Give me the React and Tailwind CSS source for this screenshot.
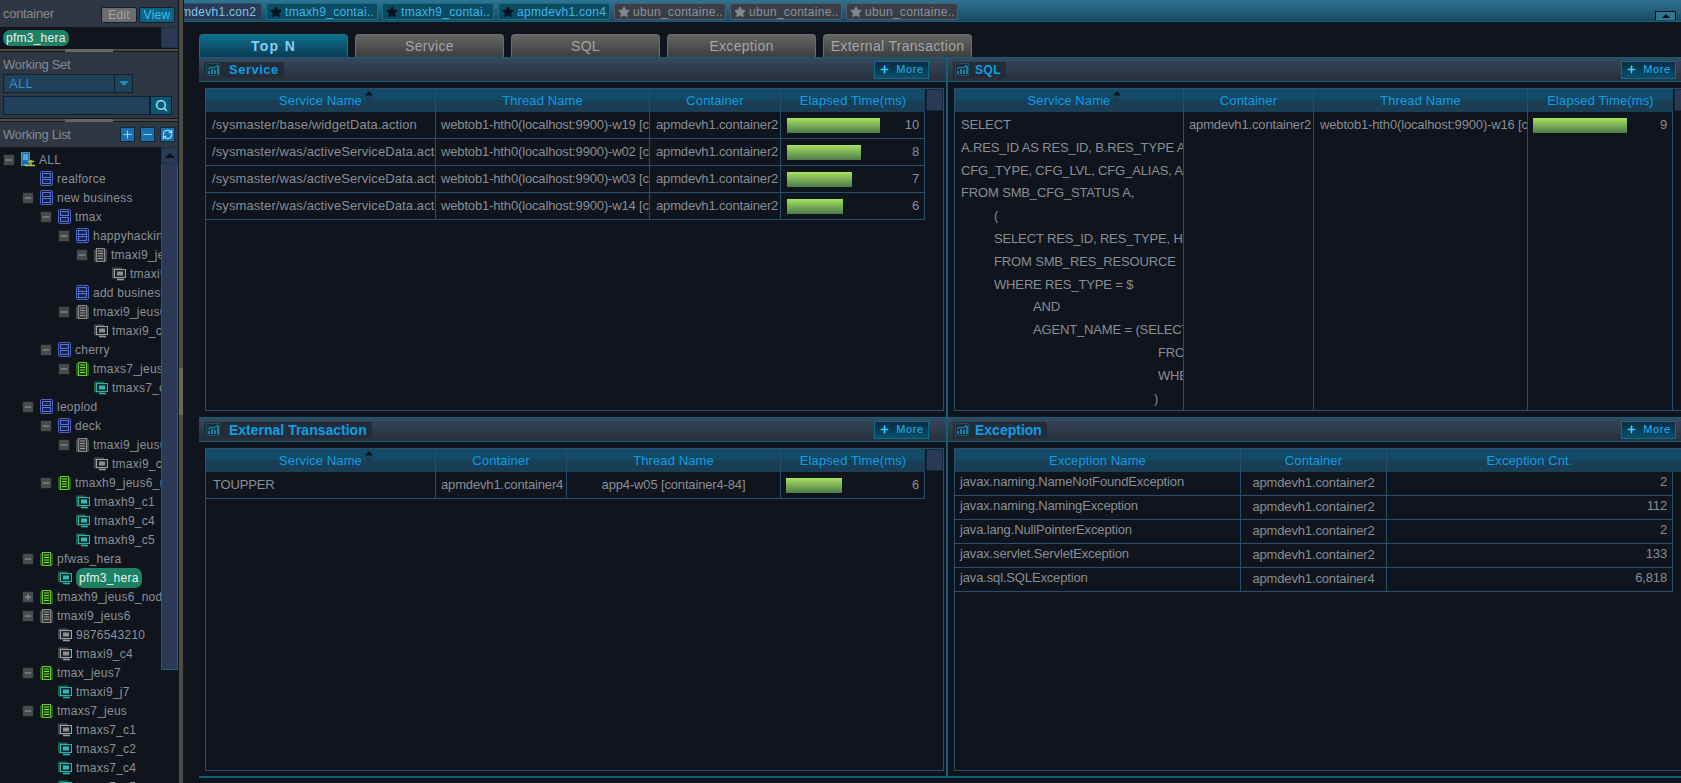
import { Minus, Plus, RefreshCw, Search, Star } from 'lucide-react'

const fontStack = "font-['Liberation_Sans',Arial,sans-serif]"

const topTabs = [
  { label: 'apmdevh1.con2', kind: 'first' },
  { label: 'tmaxh9_contai..', kind: 'teal' },
  { label: 'tmaxh9_contai..', kind: 'teal' },
  { label: 'apmdevh1.con4', kind: 'teal' },
  { label: 'ubun_containe..', kind: 'gray' },
  { label: 'ubun_containe..', kind: 'gray' },
  { label: 'ubun_containe..', kind: 'gray' },
]

const levelPad = [
  'pl-[3px]',
  'pl-[22px]',
  'pl-[40px]',
  'pl-[58px]',
  'pl-[76px]',
  'pl-[94px]',
]

const tree = [
  { level: 0, box: '-', icon: 'root', label: 'ALL' },
  { level: 1, icon: 'group', label: 'realforce' },
  { level: 1, box: '-', icon: 'group', label: 'new business' },
  { level: 2, box: '-', icon: 'group', label: 'tmax' },
  { level: 3, box: '-', icon: 'group', label: 'happyhacking' },
  { level: 4, box: '-', icon: 'rackGray', label: 'tmaxi9_jeus6' },
  { level: 5, icon: 'pcGray', label: 'tmaxi9_c1' },
  { level: 3, icon: 'group', label: 'add business' },
  { level: 3, box: '-', icon: 'rackGray', label: 'tmaxi9_jeus6_node' },
  { level: 4, icon: 'pcGray', label: 'tmaxi9_c5' },
  { level: 2, box: '-', icon: 'group', label: 'cherry' },
  { level: 3, box: '-', icon: 'rackGreen', label: 'tmaxs7_jeus7' },
  { level: 4, icon: 'pcTeal', label: 'tmaxs7_c3' },
  { level: 1, box: '-', icon: 'group', label: 'leoplod' },
  { level: 2, box: '-', icon: 'group', label: 'deck' },
  { level: 3, box: '-', icon: 'rackGray', label: 'tmaxi9_jeus6_node' },
  { level: 4, icon: 'pcGray', label: 'tmaxi9_c1' },
  { level: 2, box: '-', icon: 'rackGreen', label: 'tmaxh9_jeus6_node' },
  { level: 3, icon: 'pcTeal', label: 'tmaxh9_c1' },
  { level: 3, icon: 'pcTeal', label: 'tmaxh9_c4' },
  { level: 3, icon: 'pcTeal', label: 'tmaxh9_c5' },
  { level: 1, box: '-', icon: 'rackGreen', label: 'pfwas_hera' },
  { level: 2, icon: 'pcTeal', label: 'pfm3_hera', chip: true },
  { level: 1, box: '+', icon: 'rackGreen', label: 'tmaxh9_jeus6_node' },
  { level: 1, box: '-', icon: 'rackGray', label: 'tmaxi9_jeus6' },
  { level: 2, icon: 'pcGray', label: '9876543210' },
  { level: 2, icon: 'pcGray', label: 'tmaxi9_c4' },
  { level: 1, box: '-', icon: 'rackGreen', label: 'tmax_jeus7' },
  { level: 2, icon: 'pcTeal', label: 'tmaxi9_j7' },
  { level: 1, box: '-', icon: 'rackGreen', label: 'tmaxs7_jeus' },
  { level: 2, icon: 'pcGray', label: 'tmaxs7_c1' },
  { level: 2, icon: 'pcTeal', label: 'tmaxs7_c2' },
  { level: 2, icon: 'pcTeal', label: 'tmaxs7_c4' },
  { level: 2, icon: 'pcTeal', label: 'tmaxs7_c5' },
]

const serviceRows = [
  ['/sysmaster/base/widgetData.action', 'webtob1-hth0(localhost:9900)-w19 [container2-19]', 'apmdevh1.container2', 93, 10],
  ['/sysmaster/was/activeServiceData.action', 'webtob1-hth0(localhost:9900)-w02 [container2-02]', 'apmdevh1.container2', 74, 8],
  ['/sysmaster/was/activeServiceData.action', 'webtob1-hth0(localhost:9900)-w03 [container2-03]', 'apmdevh1.container2', 65, 7],
  ['/sysmaster/was/activeServiceData.action', 'webtob1-hth0(localhost:9900)-w14 [container2-14]', 'apmdevh1.container2', 56, 6],
]

const sqlLines = [
  { text: 'SELECT', pad: 'pl-0' },
  { text: 'A.RES_ID AS RES_ID, B.RES_TYPE AS RES_TYPE,', pad: 'pl-0' },
  { text: 'CFG_TYPE, CFG_LVL, CFG_ALIAS, A.CFG_VALUE', pad: 'pl-0' },
  { text: 'FROM SMB_CFG_STATUS A,', pad: 'pl-0' },
  { text: '(', pad: 'pl-[33px]' },
  { text: 'SELECT RES_ID, RES_TYPE, HOST_NAME', pad: 'pl-[33px]' },
  { text: 'FROM SMB_RES_RESOURCE', pad: 'pl-[33px]' },
  { text: 'WHERE RES_TYPE = $', pad: 'pl-[33px]' },
  { text: 'AND', pad: 'pl-[72px]' },
  { text: 'AGENT_NAME = (SELECT AGENT_NAME', pad: 'pl-[72px]' },
  { text: 'FROM', pad: 'pl-[197px]' },
  { text: 'WHERE', pad: 'pl-[197px]' },
  { text: ')', pad: 'pl-[193px]' },
]

const exceptionRows = [
  ['javax.naming.NameNotFoundException', 'apmdevh1.container2', '2'],
  ['javax.naming.NamingException', 'apmdevh1.container2', '112'],
  ['java.lang.NullPointerException', 'apmdevh1.container2', '2'],
  ['javax.servlet.ServletException', 'apmdevh1.container2', '133'],
  ['java.sql.SQLException', 'apmdevh1.container4', '6,818'],
]

function TreeIcon({ kind }) {
  if (kind === 'root') {
    return (
      <svg viewBox="0 0 14 15" className="h-[15px] w-[14px] shrink-0">
        <rect x="0.5" y="0.5" width="8" height="13" fill="#1d6fa8" stroke="#3f8fc8" />
        <path d="M2 3h5M2 5h5M2 7h5" stroke="#9fd0ee" />
        <path d="M7 9.5h6M10 8v2M4.5 13.5h10M4.5 12v2M10 10v4" stroke="#b7c93a" strokeWidth="1.4" fill="none" />
      </svg>
    )
  }
  if (kind === 'group') {
    return (
      <svg viewBox="0 0 13 15" className="h-[15px] w-[13px] shrink-0">
        <rect x="0.5" y="0.5" width="12" height="14" rx="1.5" fill="#141c33" stroke="#4a62c4" />
        <rect x="2.5" y="2.5" width="8" height="4" fill="#1b2444" stroke="#5a74d8" />
        <rect x="2.5" y="8.5" width="8" height="4" fill="#1b2444" stroke="#5a74d8" />
      </svg>
    )
  }
  if (kind === 'rackGray' || kind === 'rackGreen') {
    const green = kind === 'rackGreen'
    return (
      <svg viewBox="0 0 13 14" className="h-[14px] w-[13px] shrink-0">
        <rect x="0" y="1" width="13" height="13" rx="1.5" fill={green ? '#2b5a2a' : '#4a4a4a'} />
        <rect x="2.5" y="0.5" width="8" height="13" fill={green ? '#1c3a14' : '#383838'} stroke={green ? '#69c52f' : '#8a8a8a'} />
        <path d="M4 3h5M4 5.5h5M4 8h5M4 10.5h5" stroke={green ? '#7fdc3a' : '#9a9a9a'} />
      </svg>
    )
  }
  const teal = kind === 'pcTeal'
  return (
    <svg viewBox="0 0 14 14" className="h-[14px] w-[14px] shrink-0">
      <rect x="0" y="0.5" width="10" height="11" rx="1" fill={teal ? '#285f38' : '#4a4a4a'} />
      <rect x="2.5" y="2.5" width="11" height="8" fill="#12242c" stroke={teal ? '#27b3b0' : '#a0a0a0'} />
      <rect x="5" y="4.5" width="6" height="4" fill={teal ? '#2fb8b4' : '#8e8e8e'} />
      <path d="M5 12.5h7" stroke={teal ? '#27b3b0' : '#9a9a9a'} strokeWidth="1.6" />
    </svg>
  )
}

function ChartIcon() {
  return (
    <svg viewBox="0 0 14 13" className="h-[13px] w-[14px] shrink-0">
      <rect x="0.5" y="0.5" width="13" height="12" fill="#17303f" stroke="#1f4d62" />
      <path d="M3 11V8M6 11V6M9 11V7M12 11V3" stroke="#1c7f9c" strokeWidth="2" />
      <path d="M2 6l3-2 3 1 4-3" stroke="#2a9cba" fill="none" />
    </svg>
  )
}

function SortCarets() {
  return (
    <svg viewBox="0 0 8 11" className="absolute left-full top-0 ml-[3px] h-[11px] w-[8px]">
      <path d="M4 0l4 4.5H0z" fill="#0c1118" />
      <path d="M4 11L0 6.5h8z" fill="#1f3a4f" />
    </svg>
  )
}

function TopTab({ label, kind }) {
  const tone = {
    first: 'bg-[#2a3a55] border-[#35506e] text-[#7fc4ee] -ml-[34px] pl-[1px]',
    teal: 'bg-[#0b4a60] border-[#16708c] text-[#3fb6e6] pl-[3px]',
    gray: 'bg-[#3a3f47] border-[#565b63] text-[#8b9096] pl-[3px]',
  }[kind]
  const star = kind === 'gray' ? 'text-[#85898f] fill-[#85898f]' : 'text-[#0a1420] fill-[#0a1420]'
  return (
    <div className={`flex h-[17px] w-[112px] shrink-0 items-center gap-[3px] overflow-hidden whitespace-nowrap rounded-[2px] border text-[12px] tracking-[0.3px] ${tone}`}>
      <Star className={`h-[12px] w-[12px] shrink-0 ${star}`} />
      <span className="leading-none">{label}</span>
    </div>
  )
}

function TreeRow({ node }) {
  return (
    <div className={`flex h-[19px] items-center whitespace-nowrap ${levelPad[node.level]}`}>
      {node.box ? (
        <span className="mr-[6px] flex h-[12px] w-[12px] shrink-0 items-center justify-center border border-[#1c1c1c] bg-[#474a4d]">
          {node.box === '+' ? (
            <Plus className="h-[10px] w-[10px] text-[#b0b0b0]" strokeWidth={2} />
          ) : (
            <Minus className="h-[10px] w-[10px] text-[#b0b0b0]" strokeWidth={2} />
          )}
        </span>
      ) : (
        <span className="mr-[6px] w-[12px] shrink-0" />
      )}
      <TreeIcon kind={node.icon} />
      {node.chip ? (
        <span className="ml-[4px] rounded-[7px] bg-[#1c8263] px-[3px] py-[1px] text-[#f0f0f0]">{node.label}</span>
      ) : (
        <span className="ml-[4px] text-[#8d9196]">{node.label}</span>
      )}
    </div>
  )
}

function Grip() {
  return (
    <div className="flex h-[4px] shrink-0 items-center justify-center border-y border-[#14171c] bg-[#4e4a45]">
      <div className="h-[3px] w-[48px] bg-[#6a665f]" />
    </div>
  )
}

function ToolButton({ children }) {
  return (
    <button type="button" className="flex h-[15px] w-[15px] items-center justify-center border border-[#0b2a3f] bg-[#1871ac] text-[#8fd8ff]">
      {children}
    </button>
  )
}

function Sidebar() {
  return (
    <aside className="flex w-[178px] shrink-0 flex-col text-[12px] tracking-[0.25px]">
      <div className="flex h-[27px] shrink-0 items-center justify-between bg-[#2f3742] pl-[3px] pr-[3px]">
        <span className="text-[13px] tracking-[-0.3px] text-[#858a90]">container</span>
        <div className="mt-[3px] flex gap-[2px]">
          <button type="button" className="h-[16px] w-[36px] rounded-[2px] border border-[#0c2230] bg-[#6a6c6e] text-[12px] leading-none text-[#a2a4a6]">
            Edit
          </button>
          <button type="button" className="h-[16px] w-[36px] rounded-[2px] border border-[#0c2230] bg-[#0f6186] text-[12px] leading-none text-[#3cc0ee]">
            View
          </button>
        </div>
      </div>
      <div className="flex h-[21px] shrink-0 items-center justify-between">
        <span className="ml-[3px] rounded-[7px] bg-[#1c8263] px-[3px] py-[1px] leading-[14px] text-[#f0f0f0]">pfm3_hera</span>
        <div className="h-[21px] w-[17px] border border-[#1e3048] bg-[#2a3a55]" />
      </div>
      <Grip />
      <div className="flex h-[66px] shrink-0 flex-col bg-[#2f3742] px-[3px]">
        <span className="mt-[4px] h-[18px] text-[13px] leading-[18px] tracking-[-0.3px] text-[#858a90]">Working Set</span>
        <div className="flex h-[19px] w-[130px] border border-[#0c2230] bg-[#21405a]">
          <span className="flex-1 pl-[5px] text-[13px] leading-[17px] text-[#2f8fca]">ALL</span>
          <span className="flex w-[18px] items-center justify-center border-l border-[#0c2230]">
            <span className="h-0 w-0 border-x-[5px] border-t-[5px] border-x-transparent border-t-[#1f8fb8]" />
          </span>
        </div>
        <div className="mt-[3px] flex h-[19px] w-[169px]">
          <div className="w-[147px] border border-[#0c2230] bg-[#21405a]" />
          <div className="flex w-[22px] items-center justify-center border border-[#0c2230] bg-[#0d5673]">
            <Search className="h-[13px] w-[13px] text-[#7fe0f0]" strokeWidth={3} />
          </div>
        </div>
      </div>
      <Grip />
      <div className="flex h-[25px] shrink-0 items-center justify-between bg-[#2f3742] pl-[3px] pr-[3px]">
        <span className="text-[13px] tracking-[-0.3px] text-[#858a90]">Working List</span>
        <div className="flex gap-[5px]">
          <ToolButton><Plus className="h-[13px] w-[13px]" strokeWidth={2} /></ToolButton>
          <ToolButton><Minus className="h-[13px] w-[13px]" strokeWidth={2} /></ToolButton>
          <ToolButton><RefreshCw className="h-[11px] w-[11px]" strokeWidth={3} /></ToolButton>
        </div>
      </div>
      <div className="flex min-h-0 flex-1">
        <div className="min-w-0 flex-1 overflow-hidden pt-[3px]">
          {tree.map((node, index) => (
            <TreeRow key={`${node.label}-${index}`} node={node} />
          ))}
        </div>
        <div className="flex w-[17px] shrink-0 flex-col">
          <div className="flex h-[17px] shrink-0 items-center justify-center border border-[#1e3048] bg-[#2a3a55]">
            <span className="h-0 w-0 border-x-[5px] border-b-[5px] border-x-transparent border-b-[#0c1118]" />
          </div>
          <div className="h-[506px] shrink-0 border-x border-b border-[#255a78] bg-[#2a3a55]" />
        </div>
      </div>
    </aside>
  )
}

function Splitter() {
  return (
    <div className="flex w-[6px] shrink-0 flex-col justify-center border-x border-[#14171c] bg-[#4e4a45]">
      <div className="h-[47px] bg-[#6a665f]" />
    </div>
  )
}

function PanelHeader({ title, titleClass, moreClass, gapClass }) {
  return (
    <div className="flex h-[25px] shrink-0 items-center justify-between border-y border-[#0e6178] bg-gradient-to-b from-[#35495e] to-[#272f3b]">
      <div className={`ml-[5px] flex h-[16px] items-center bg-[#232c39] pl-[2px] pr-[5px] ${gapClass}`}>
        <ChartIcon />
        <span className={`font-bold leading-none text-[#0a9fe6] ${titleClass}`}>{title}</span>
      </div>
      <button type="button" className={`flex h-[18px] w-[55px] items-center justify-center gap-[6px] border border-[#0f6a8e] bg-gradient-to-b from-[#0a2c42] to-[#06506e] text-[11px] tracking-[0.6px] text-[#1cb4ec] ${moreClass}`}>
        <Plus className="h-[11px] w-[11px] text-[#30d0ff]" strokeWidth={3.5} />
        More
      </button>
    </div>
  )
}

function HeadCell({ children, sort }) {
  return (
    <div className="flex items-center justify-center border-r border-[#2a4f6a] text-[13px] tracking-[0.1px] text-[#0a9fe6] last:border-r-0">
      <span className="relative">
        {children}
        {sort ? <SortCarets /> : null}
      </span>
    </div>
  )
}

function TableHead({ grid, columns, sort }) {
  return (
    <div className={`grid h-[23px] shrink-0 bg-gradient-to-b from-[#134a68] from-50% to-[#193e56] to-50% ${grid}`}>
      {columns.map((col, index) => (
        <HeadCell key={col} sort={sort && index === 0}>{col}</HeadCell>
      ))}
    </div>
  )
}

function Bar({ width }) {
  return <div className="h-[15px] bg-gradient-to-b from-[#a9e35e] to-[#4c7c4a]" style={{ width }} />
}

function Cell({ children, align = 'text-left', className = '' }) {
  return (
    <div className={`overflow-hidden whitespace-nowrap border-r border-[#2a4f6a] text-[13px] leading-[26px] tracking-[-0.15px] text-[#8a8e93] ${align} ${className}`}>
      {children}
    </div>
  )
}

function ScrollCap() {
  return (
    <div className="flex flex-1 flex-col pl-[1px]">
      <div className="h-[22px] border border-[#14283a] bg-[#2a3a55]" />
    </div>
  )
}

function ServicePanel() {
  const grid = 'grid-cols-[230px_214px_131px_144px]'
  return (
    <section className="flex min-h-0 flex-col border-r-2 border-[#0e6178]">
      <PanelHeader title="Service" titleClass="text-[13px] tracking-[0.5px]" moreClass="mr-[17px]" gapClass="gap-[9px]" />
      <div className="ml-[6px] mr-[2px] mt-[6px] flex h-[323px] border border-[#2a4f6a]">
        <div className="w-[719px] shrink-0">
          <TableHead grid={grid} columns={['Service Name', 'Thread Name', 'Container', 'Elapsed Time(ms)']} sort />
          {serviceRows.map((row) => (
            <div key={row[1]} className={`grid h-[27px] border-b border-[#2a4f6a] ${grid}`}>
              <Cell className="pl-[6px] tracking-[0.1px]">{row[0]}</Cell>
              <Cell className="pl-[5px]">{row[1]}</Cell>
              <Cell className="pl-[6px]">{row[2]}</Cell>
              <Cell className="flex items-center justify-between pl-[6px] pr-[5px]">
                <Bar width={row[3]} />
                <span>{row[4]}</span>
              </Cell>
            </div>
          ))}
        </div>
        <ScrollCap />
      </div>
    </section>
  )
}

function SqlPanel() {
  const grid = 'grid-cols-[229px_130px_214px_145px]'
  return (
    <section className="flex min-h-0 min-w-0 flex-col">
      <PanelHeader title="SQL" titleClass="text-[12px] tracking-[0.5px]" moreClass="mr-[5px]" gapClass="gap-[6px]" />
      <div className="ml-[6px] mt-[6px] flex h-[323px] w-[733px] border border-[#2a4f6a]">
        <div className="w-[718px] shrink-0">
          <TableHead grid={grid} columns={['Service Name', 'Container', 'Thread Name', 'Elapsed Time(ms)']} sort />
          <div className={`grid h-[299px] ${grid}`}>
            <div className="overflow-hidden whitespace-nowrap border-r border-[#2a4f6a] pl-[6px] pt-[2px] text-[13px] leading-[22.8px] tracking-[-0.15px] text-[#8a8e93]">
              {sqlLines.map((line) => (
                <div key={line.text} className={line.pad}>{line.text}</div>
              ))}
            </div>
            <Cell className="pl-[5px]">apmdevh1.container2</Cell>
            <Cell className="pl-[6px]">webtob1-hth0(localhost:9900)-w16 [container2-16]</Cell>
            <Cell>
              <div className="flex h-[26px] items-center justify-between pl-[5px] pr-[5px]">
                <Bar width={94} />
                <span>9</span>
              </div>
            </Cell>
          </div>
        </div>
        <ScrollCap />
      </div>
    </section>
  )
}

function ExternalPanel() {
  const grid = 'grid-cols-[230px_131px_214px_144px]'
  return (
    <section className="flex min-h-0 flex-col border-r-2 border-[#0e6178]">
      <PanelHeader title="External Transaction" titleClass="text-[14px]" moreClass="mr-[17px]" gapClass="gap-[9px]" />
      <div className="ml-[6px] mr-[2px] mt-[6px] flex h-[323px] border border-[#2a4f6a]">
        <div className="w-[719px] shrink-0">
          <TableHead grid={grid} columns={['Service Name', 'Container', 'Thread Name', 'Elapsed Time(ms)']} sort />
          <div className={`grid h-[27px] border-b border-[#2a4f6a] ${grid}`}>
            <Cell className="pl-[7px]">TOUPPER</Cell>
            <Cell className="pl-[5px]">apmdevh1.container4</Cell>
            <Cell align="text-center">app4-w05 [container4-84]</Cell>
            <Cell className="flex items-center justify-between pl-[5px] pr-[5px]">
              <Bar width={56} />
              <span>6</span>
            </Cell>
          </div>
        </div>
        <ScrollCap />
      </div>
    </section>
  )
}

function ExceptionPanel() {
  const grid = 'grid-cols-[286px_146px_285px]'
  return (
    <section className="flex min-h-0 min-w-0 flex-col">
      <PanelHeader title="Exception" titleClass="text-[14px]" moreClass="mr-[5px]" gapClass="gap-[6px]" />
      <div className="ml-[6px] mt-[6px] h-[323px] w-[733px] border border-[#2a4f6a]">
        <TableHead grid={grid} columns={['Exception Name', 'Container', 'Exception Cnt.']} />
        {exceptionRows.map((row) => (
          <div key={row[0]} className={`grid h-[24px] w-[718px] border-b border-r border-[#2a4f6a] ${grid}`}>
            <Cell className="pl-[5px] !leading-[20px]">{row[0]}</Cell>
            <Cell align="text-center" className="!leading-[22px]">{row[1]}</Cell>
            <Cell align="text-right" className="pr-[5px] !border-r-0 !leading-[20px]">{row[2]}</Cell>
          </div>
        ))}
      </div>
    </section>
  )
}

export default function App() {
  return (
    <div className={`flex h-screen w-screen overflow-hidden bg-[#0f141d] ${fontStack}`}>
      <Sidebar />
      <Splitter />
      <main className="flex min-w-0 flex-1 flex-col overflow-hidden">
        <div className="flex h-[22px] shrink-0 items-end justify-between border-b border-[#0e6178] bg-gradient-to-b from-[#2f7492] to-[#184a62] pb-[1px]">
          <div className="flex gap-[4px]">
            {topTabs.map((tab, index) => (
              <TopTab key={`${tab.label}-${index}`} label={tab.label} kind={tab.kind} />
            ))}
          </div>
          <div className="mr-[5px] flex h-[9px] w-[21px] items-center justify-center border border-b-0 border-[#0c1118] bg-[#2f7492]">
            <span className="h-0 w-0 border-x-[4px] border-b-[4px] border-x-transparent border-b-[#0c1118]" />
          </div>
        </div>
        <div className="ml-[15px] mt-[12px] flex h-[23px] shrink-0 items-end gap-[7px]">
          <div className="flex h-[23px] w-[149px] items-center justify-center rounded-t-[4px] border border-b-0 border-[#17708c] bg-gradient-to-b from-[#0e6f90] to-[#0a3c54] text-[14px] font-bold tracking-[1.3px] text-[#85cdf0]">
            Top N
          </div>
          {['Service', 'SQL', 'Exception', 'External Transaction'].map((label) => (
            <div key={label} className="flex h-[23px] w-[149px] items-center justify-center rounded-t-[4px] border border-b-0 border-[#6c6c6c] bg-gradient-to-b from-[#666666] to-[#3e3e3e] text-[14px] tracking-[0.3px] text-[#a5a5a5]">
              {label}
            </div>
          ))}
        </div>
        <div className="ml-[15px] grid h-[721px] shrink-0 grid-cols-[749px_1fr] grid-rows-[360px_361px] border-b-2 border-[#0e6178]">
          <ServicePanel />
          <SqlPanel />
          <ExternalPanel />
          <ExceptionPanel />
        </div>
      </main>
    </div>
  )
}
